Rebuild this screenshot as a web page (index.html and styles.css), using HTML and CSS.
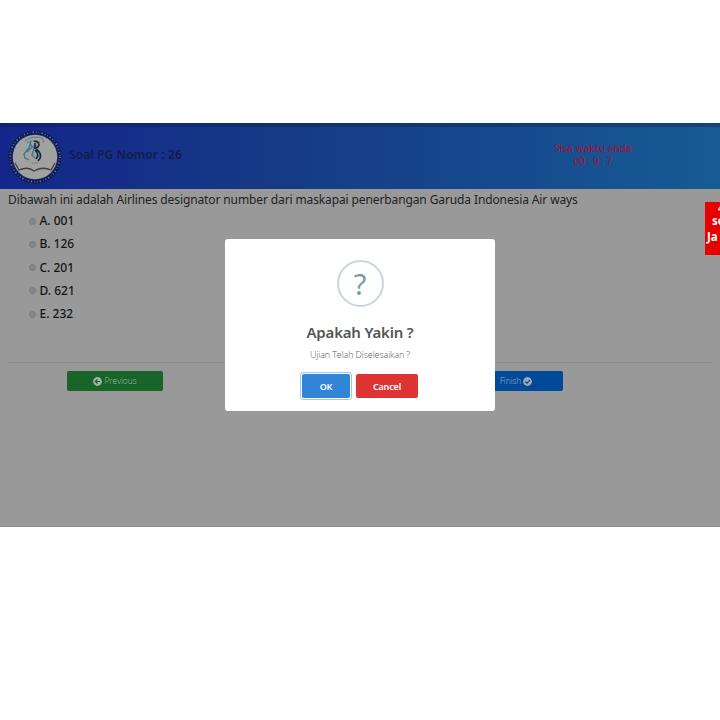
FILE: index.html
```html
<!DOCTYPE html>
<html lang="id">
<head>
<meta charset="utf-8">
<title>Soal PG</title>
<link rel="stylesheet" href="styles.css">
</head>
<body>
<main class="app">
  <header class="header">
    <svg class="logo" viewBox="0 0 54 54">
      <circle cx="27" cy="27" r="24.8" fill="none" stroke="#101b4c" stroke-width="3.4"/>
      <circle cx="27" cy="27" r="24.8" fill="none" stroke="#62749c" stroke-width="1.7" stroke-dasharray="1 1.8 .6 2.2 1.4 2"/>
      <circle cx="27" cy="27" r="22.2" fill="#a1a2a0"/>
      <path d="M7 33 L11 40 Q20 36 26 41 Q34 36 43 40 L47 33" fill="none" stroke="#413d40" stroke-width="1.3"/>
      <path d="M17 11 Q24 5 34 8 L36 13 M19 13 Q26 9 32 12" fill="none" stroke="#66777c" stroke-width="1"/>
      <path d="M23 11 L21 18 L16 24 L17 28 L21 30 M22 14 L26 18 L24 25 L27 28 M19 22 L24 17" fill="none" stroke="#33779a" stroke-width="1.3"/>
      <path d="M26 11 Q33 12 30 17 L27 18 L27 13 M28 19 Q36 25 30 31 M27 20 Q32 25 28 29" fill="none" stroke="#172842" stroke-width="1.7"/>
      <path d="M24 33 H30" stroke="#8b765f" stroke-width="1"/>
    </svg>
    <h1 class="title">Soal PG Nomor : 26</h1>
    <div class="timer"><span class="timer-label">Sisa waktu anda</span><span class="timer-value">00 : 9 : 7</span></div>
  </header>
  <section class="question">
    <p class="prompt">Dibawah ini adalah Airlines designator number dari maskapai penerbangan Garuda Indonesia Air ways</p>
    <div class="options">
      <label class="option"><i class="radio"></i><span>A. 001</span></label>
      <label class="option"><i class="radio"></i><span>B. 126</span></label>
      <label class="option"><i class="radio"></i><span>C. 201</span></label>
      <label class="option"><i class="radio"></i><span>D. 621</span></label>
      <label class="option"><i class="radio"></i><span>E. 232</span></label>
    </div>
  </section>
  <nav class="actions">
    <button class="nav-btn previous"><svg class="icon" viewBox="0 0 16 16"><circle cx="8" cy="8" r="7.8" fill="#a3b5a6"/><path d="M12.5 8H4.5M8 4.2L4.2 8L8 11.8" fill="none" stroke="#186429" stroke-width="2.2"/></svg><span>Previous</span></button>
    <button class="nav-btn finish"><span>Finish</span><svg class="icon" viewBox="0 0 16 16"><circle cx="8" cy="8" r="7.8" fill="#9aabc0"/><path d="M4 8.2L7 11L12.3 5.5" fill="none" stroke="#123e70" stroke-width="2.2"/></svg></button>
  </nav>
  <aside class="notice"><span>4</span><span>se</span><span>Ja</span></aside>
  <div class="modal" role="dialog">
    <div class="modal-icon">?</div>
    <h2 class="modal-title">Apakah Yakin ?</h2>
    <p class="modal-text">Ujian Telah Diselesaikan ?</p>
    <div class="modal-actions"><button class="btn ok">OK</button><button class="btn cancel">Cancel</button></div>
  </div>
</main>
</body>
</html>
```
FILE: styles.css
```css
* { box-sizing: border-box; }
body { margin: 0; padding-top: 123px; height: 720px; background: #fff; font-family: "Noto Sans", "Open Sans", sans-serif; overflow: hidden; }
h1, h2, p { margin: 0; }
button { border: 0; padding: 0; font-family: inherit; }
.app { position: relative; height: 404px; background: #999; overflow: hidden; border-bottom: 1px solid #8d8d8d; }
.header { display: flex; align-items: flex-start; height: 66px; padding: 3px 88px 0 8px; background: linear-gradient(90deg, #14268b, #163a86 38%, #164a8e 70%, #175b94); border-top: 4px solid rgba(10, 30, 80, .35); }
.logo { width: 54px; height: 54px; flex: none; }
.title { margin: 16px 0 0 7px; font-size: 12px; line-height: 18px; font-weight: 600; letter-spacing: .1px; color: #111c4c; white-space: nowrap; }
.timer { display: flex; flex-direction: column; align-items: center; width: 78px; margin: 12px 0 0 auto; font-size: 10px; line-height: 12.5px; font-weight: 500; color: #98193f; white-space: nowrap; }
.question { height: 174px; margin: 0 8px; border-bottom: 1px solid #8c8c8c; }
.prompt { padding-top: 2px; font-size: 12px; line-height: 18px; letter-spacing: -.115px; color: #222; white-space: nowrap; }
.options { display: flex; flex-direction: column; padding-left: 21px; }
.option { display: flex; align-items: center; height: 23.25px; font-size: 12px; font-weight: 500; color: #151515; }
.radio { width: 7px; height: 7px; margin: 1px 3.5px 0 0; border: 1px solid #7b7b7b; border-radius: 50%; background: #858585; }
.actions { display: flex; justify-content: space-between; padding: 8px 157px 0 67px; }
.nav-btn { display: flex; align-items: center; justify-content: center; gap: 2px; width: 96px; height: 20px; border-radius: 2px; font-family: "Open Sans", sans-serif; font-weight: 300; font-size: 8.5px; line-height: 12px; letter-spacing: -.08px; }
.previous { background: #186429; color: #a5bbaa; }
.finish { background: #004a99; color: #a1b4cc; padding-left: 2px; }
.icon { width: 9px; height: 9px; }
.notice { position: absolute; left: 705px; top: 79px; width: 40px; height: 53px; padding-left: 2px; background: #e60000; color: #fff; font-size: 11.5px; line-height: 16px; font-weight: 700; display: flex; flex-direction: column; }
.notice span:first-child { height: 11px; margin-left: 11px; line-height: 12px; font-size: 9px; }
.notice span:nth-child(2) { margin-left: 5px; }
.modal { position: absolute; left: 225px; top: 116px; width: 270px; height: 172px; padding-top: 21px; display: flex; flex-direction: column; align-items: center; background: #fff; border-radius: 3px; }
.modal-icon { display: flex; align-items: center; justify-content: center; width: 47px; height: 47px; border: 2px solid #c5d6df; border-radius: 50%; color: #739fab; font-size: 29px; line-height: 1; }
.modal-title { margin-top: 13px; font-size: 15px; line-height: 25px; font-weight: 600; letter-spacing: -.2px; color: #555; }
.modal-text { margin-top: 3px; font-family: "Open Sans", sans-serif; font-size: 9px; line-height: 14px; font-weight: 300; letter-spacing: -.12px; color: #555; }
.modal-actions { display: flex; gap: 6px; margin-top: 12px; }
.btn { height: 24px; border-radius: 2px; color: #fff; font-size: 9px; font-weight: 600; letter-spacing: -.15px; }
.ok { width: 48px; background: #3085d6; box-shadow: 0 0 0 1px #fff, 0 0 0 2px #a0c5ea; }
.cancel { width: 62px; background: #dd3333; }
```
